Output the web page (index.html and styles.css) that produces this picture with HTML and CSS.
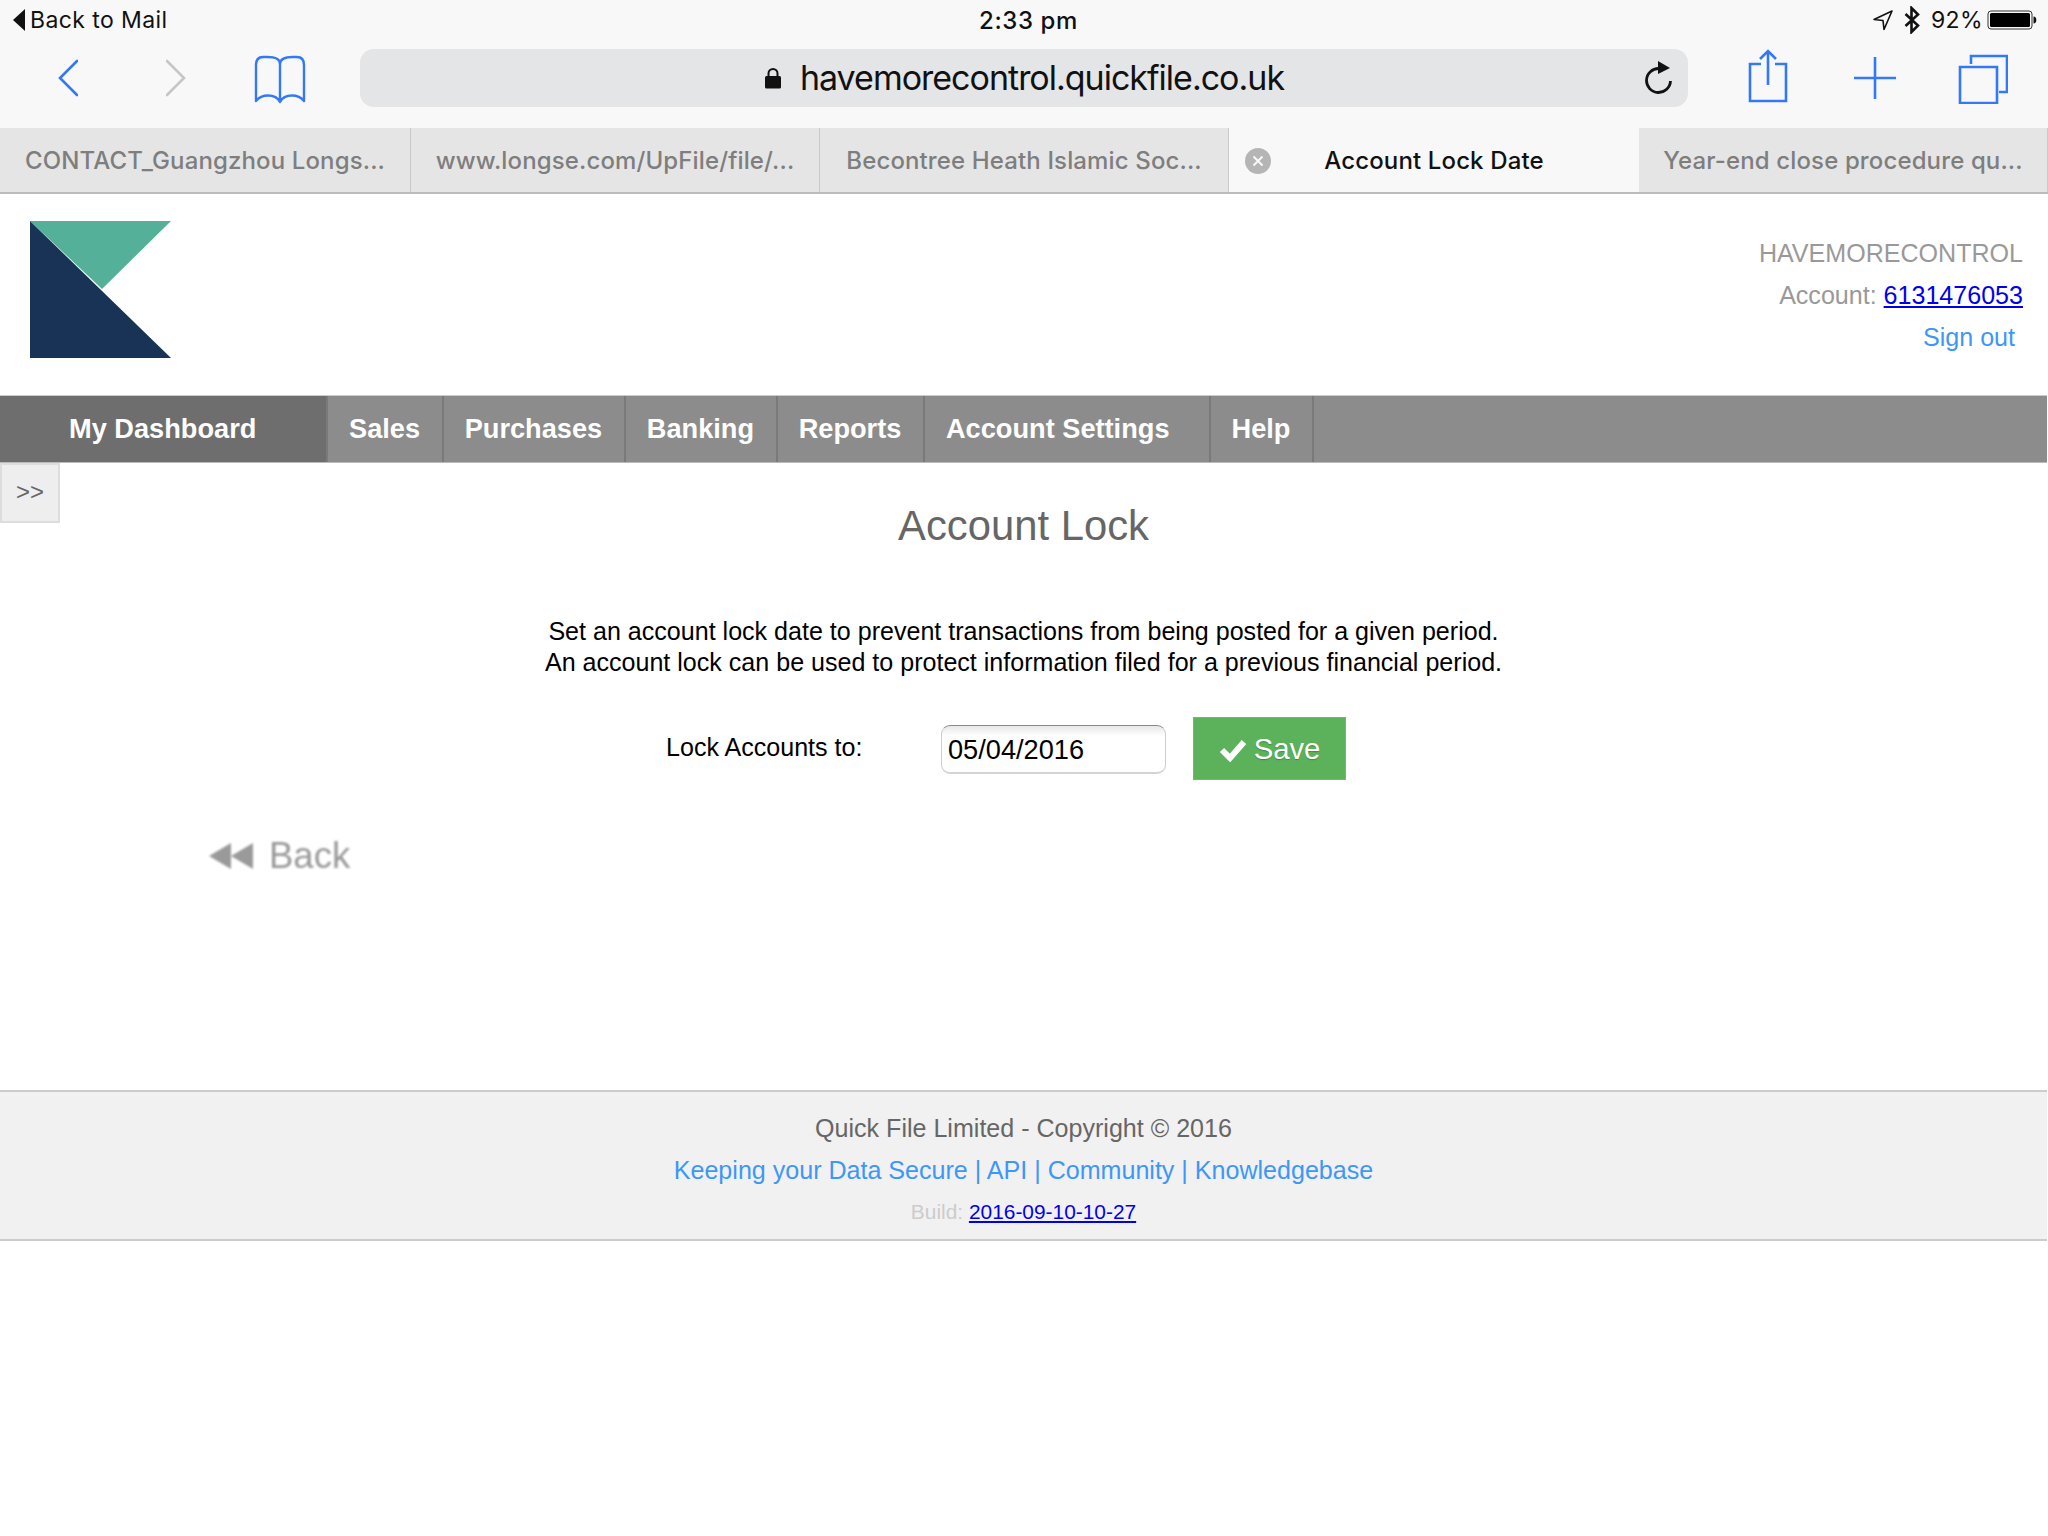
FILE: index.html
```html
<!DOCTYPE html>
<html lang="en">
<head>
<meta charset="utf-8">
<title>Account Lock Date</title>
<link rel="stylesheet" href="styles.css">
</head>
<body>
<div class="status">
  <div class="status-left">
    <svg class="back-tri" width="14" height="22" viewBox="0 0 14 22"><path d="M13 0V22L1 11Z" fill="#111"/></svg>
    <span>Back to Mail</span>
  </div>
  <div class="status-time">2:33 pm</div>
  <div class="status-right">
    <svg width="22" height="24" viewBox="0 0 22 24"><path d="M20 3 2 11.5 11 12.5 12 21.500Z" fill="none" stroke="#111" stroke-width="1.6" stroke-linejoin="round"/></svg>
    <svg class="bt" width="18" height="28" viewBox="0 0 18 28"><path d="M2.500 8 15 19.500 8.500 26V2L15 8.500 2.500 20" fill="none" stroke="#111" stroke-width="2.600"/></svg>
    <span class="pct">92%</span>
    <svg width="50" height="20" viewBox="0 0 50 20"><rect x="1" y="1" width="44" height="18" rx="3" fill="none" stroke="#333" stroke-width="1"/><rect x="3" y="3" width="40" height="14" rx="1.500" fill="#000"/><path d="M46.500 6.500c2 0 2.800 1.500 2.800 3.500s-.8 3.500-2.800 3.500Z" fill="#111"/></svg>
  </div>
</div>

<div class="toolbar">
  <svg class="ic-back" width="20" height="38" viewBox="0 0 20 38"><path d="M19 2 2 19 19 36" fill="none" stroke="#3478f6" stroke-width="2.600" stroke-linecap="round"/></svg>
  <svg class="ic-fwd" width="20" height="38" viewBox="0 0 20 38"><path d="M1 2 18 19 1 36" fill="none" stroke="#c6c6c8" stroke-width="2.600" stroke-linecap="round"/></svg>
  <svg class="ic-book" width="52" height="50" viewBox="0 0 52 50"><path d="M26 9C26 4 22 2 13 2H9C4.500 2 2 5 2 10V46C6 41 10 40.500 14 40.500 20 40.500 24 43 26 47 28 43 32 40.500 38 40.500 42 40.500 46 41 50 46V10C50 5 47.500 2 43 2H39C30 2 26 4 26 9V47" fill="none" stroke="#3478f6" stroke-width="2.400" stroke-linejoin="round"/></svg>
  <div class="url">
    <svg class="lock" width="18" height="22" viewBox="0 0 18 22"><path d="M4.500 10V6.500a4.500 4.500 0 0 1 9 0V10" fill="none" stroke="#111" stroke-width="2"/><rect x="1" y="9" width="16" height="12.500" rx="1.500" fill="#111"/></svg>
    <span class="url-text">havemorecontrol.quickfile.co.uk</span>
    <svg class="reload" width="32" height="34" viewBox="0 0 32 34"><path d="M16 8.500A12 12 0 1 0 27.500 21" fill="none" stroke="#111" stroke-width="2.800"/><path d="M15 1 27 8 15 14Z" fill="#111"/></svg>
  </div>
  <svg class="ic-share" width="40" height="54" viewBox="0 0 40 54"><path d="M13 15H2V52H38V15H27M20 36V3M12 10 20 2 28 10" fill="none" stroke="#3478f6" stroke-width="2.600"/></svg>
  <svg class="ic-plus" width="42" height="42" viewBox="0 0 42 42"><path d="M0 21H42M21 0V42" stroke="#3478f6" stroke-width="2.600"/></svg>
  <svg class="ic-tabs" width="50" height="50" viewBox="0 0 50 50"><path d="M2 13H39V49H2ZM13 10V2H49V38H41" fill="none" stroke="#3478f6" stroke-width="2.600"/></svg>
</div>

<div class="tabs">
  <div class="tab">CONTACT_Guangzhou Longs...</div>
  <div class="tab">www.longse.com/UpFile/file/...</div>
  <div class="tab">Becontree Heath Islamic Soc...</div>
  <div class="tab tab-active">
    <svg class="tab-close" width="26" height="26" viewBox="0 0 26 26"><circle cx="13" cy="13" r="13" fill="#b5b5b5"/><path d="M8.500 8.500 17.500 17.500M17.500 8.500 8.500 17.500" stroke="#f8f8f8" stroke-width="2"/></svg>
    Account Lock Date
  </div>
  <div class="tab">Year-end close procedure qu...</div>
</div>

<div class="page">
  <header class="site-header">
    <svg class="logo" width="141" height="137" viewBox="0 0 141 137"><path d="M0 0H141L72 68Z" fill="#55b09a"/><path d="M0 0 141 137H0Z" fill="#183356"/></svg>
    <div class="account">
      <div>HAVEMORECONTROL</div>
      <div>Account: <a class="plain-link" href="#">6131476053</a></div>
      <div class="signout"><a class="soft-link" href="#">Sign out</a></div>
    </div>
  </header>

  <nav class="nav">
    <a class="nav-item nav-home" href="#">My Dashboard</a>
    <a class="nav-item" href="#">Sales</a>
    <a class="nav-item" href="#">Purchases</a>
    <a class="nav-item" href="#">Banking</a>
    <a class="nav-item" href="#">Reports</a>
    <a class="nav-item nav-settings" href="#">Account Settings</a>
    <a class="nav-item" href="#">Help</a>
  </nav>

  <main class="main">
    <button class="toggle" type="button">&gt;&gt;</button>
    <h1 class="title">Account Lock</h1>
    <p class="intro">Set an account lock date to prevent transactions from being posted for a given period.<br>An account lock can be used to protect information filed for a previous financial period.</p>
    <form class="lock-form">
      <label class="lock-label" for="lockdate">Lock Accounts to:</label>
      <input class="lock-input" id="lockdate" type="text" value="05/04/2016">
      <button class="save" type="button">
        <svg width="28" height="24" viewBox="0 0 28 24"><path d="M3 12 11 20 25 4" fill="none" stroke="#fff" stroke-width="6"/></svg>
        Save
      </button>
    </form>
    <a class="back" href="#">
      <svg width="44" height="26" viewBox="0 0 44 26"><path d="M22 0V26L0 13ZM44 0V26L22 13Z" fill="#9a9a9a"/></svg>
      Back
    </a>
  </main>

  <footer class="footer">
    <div class="foot-copy">Quick File Limited - Copyright © 2016</div>
    <div class="foot-links"><a class="soft-link" href="#">Keeping your Data Secure</a> | <a class="soft-link" href="#">API</a> | <a class="soft-link" href="#">Community</a> | <a class="soft-link" href="#">Knowledgebase</a></div>
    <div class="foot-build">Build: <a class="plain-link" href="#">2016-09-10-10-27</a></div>
  </footer>
</div>
</body>
</html>
```
FILE: styles.css
```css
* { box-sizing: border-box; }
html, body { margin: 0; padding: 0; background: #fff; }
body { width: 2048px; height: 1536px; overflow: hidden; font-family: "Liberation Sans", Arial, sans-serif; color: #000; }

.status { height: 40px; background: #f8f8f8; display: grid; grid-template-columns: 1fr auto 1fr; align-items: center; padding: 0 11px 0 12px; font-family: Inter, "Liberation Sans", sans-serif; font-size: 23px; letter-spacing: .4px; color: #111; }
.status-left { display: flex; align-items: center; gap: 4px; }
.status-time { padding-left: 8px; font-size: 24px; font-weight: 500; letter-spacing: .6px; }
.status-right { display: flex; align-items: center; justify-content: flex-end; }
.status-right .bt { margin-left: 9px; }
.pct { margin: 0 4px 0 10px; }

.toolbar { height: 88px; background: #f8f8f8; display: flex; align-items: center; padding-bottom: 12px; }
.ic-back { margin-left: 58px; }
.ic-fwd { margin-left: 88px; }
.ic-book { margin-left: 68px; margin-top: 4px; }
.url { margin-left: 54px; width: 1328px; height: 58px; padding-bottom: 2px; border-radius: 14px; background: #e4e5e7; display: flex; align-items: center; justify-content: center; position: relative; font-family: Inter, "Liberation Sans", sans-serif; font-size: 34px; letter-spacing: -1px; color: #111; }
.lock { margin: 2px 18px 0 0; }
.reload { position: absolute; right: 13px; top: 11px; }
.ic-share { margin-left: 60px; margin-top: -4px; }
.ic-plus { margin-left: 66px; }
.ic-tabs { margin-left: 62px; margin-top: 2px; }

.tabs { height: 66px; display: grid; grid-template-columns: 411px 409px 409px 410px 409px; border-bottom: 2px solid #bcbcbc; font-family: Inter, "Liberation Sans", sans-serif; font-size: 24px; font-weight: 500; letter-spacing: .13px; }
.tab { position: relative; display: flex; align-items: center; justify-content: center; padding-top: 1px; background: #e5e5e5; color: #7e7e7e; border-right: 1px solid #cacaca; white-space: nowrap; }
.tab-active { background: #f8f8f8; color: #111; border-right: 0; }
.tab-close { position: absolute; left: 16px; top: 20px; }

.page { width: 2047px; }
.site-header { height: 201px; display: flex; justify-content: space-between; align-items: flex-start; padding: 27px 24px 0 30px; }
.account { padding-top: 11px; text-align: right; font-size: 25.07px; line-height: 42px; color: #999; }
.signout { padding-right: 8px; }
.plain-link { color: #0000ee; text-decoration: underline; }
.soft-link { color: #3d97f8; text-decoration: none; }

.nav { height: 68px; display: flex; background: #8c8c8c; border-top: 1px solid #ccc; border-bottom: 1px solid #bbb; }
.nav-item { display: flex; align-items: center; padding: 0 21.6px 0 21px; color: #fff; font-size: 27.2px; font-weight: 700; text-decoration: none; border-right: 2px solid #7a7a7a; }
.nav-home { width: 328px; padding: 0 0 0 69px; background: #6e6e6e; }
.nav-settings { padding-right: 39px; }

.main { position: relative; height: 627px; }
.toggle { position: absolute; left: 0; top: 0; width: 60px; height: 60px; padding: 0 0 3px; background: #eee; border: 2px solid #ddd; font: 24px "Liberation Sans", Arial, sans-serif; color: #666; }
.title { margin: 0; padding-top: 38px; text-align: center; font-size: 41.8px; line-height: 50px; font-weight: 400; color: #666; }
.intro { margin: 65px 0 0; text-align: center; font-size: 25.07px; line-height: 31px; }
.lock-form { margin-top: 39px; padding-left: 666px; display: flex; align-items: center; height: 63px; }
.lock-label { width: 275px; font-size: 25.07px; margin-top: -2px; }
.lock-input { width: 225px; height: 49px; margin-top: 2px; padding: 2px 6px 0; border: 1px solid #ccc; border-top-color: #888; border-bottom: 2px solid #d4d4d4; border-radius: 9px; background: linear-gradient(#e8e8e8, #fff 10px); font: 27.2px "Liberation Sans", Arial, sans-serif; color: #000; }
.save { margin-left: 27px; width: 153px; height: 63px; display: flex; align-items: center; justify-content: center; gap: 7px; padding: 2px 0 0; border: 1px solid #6dbb6b; background: #5cb25a; color: #fff; font: 29.25px "Liberation Sans", Arial, sans-serif; text-shadow: 0 1px 1px rgba(0, 0, 0, .25); }
.back { margin: 54px 0 0 209px; display: inline-flex; align-items: center; gap: 16px; font-size: 36.5px; line-height: 44px; color: #999; text-decoration: none; filter: blur(.8px); }

.footer { height: 151px; padding-top: 15px; border-top: 2px solid #ccc; border-bottom: 2px solid #ccc; background: #f1f1f1; text-align: center; font-size: 25.07px; line-height: 42px; color: #666; }
.foot-links { color: #3d97f8; }
.foot-build { font-size: 20.9px; color: #ccc; }
```
